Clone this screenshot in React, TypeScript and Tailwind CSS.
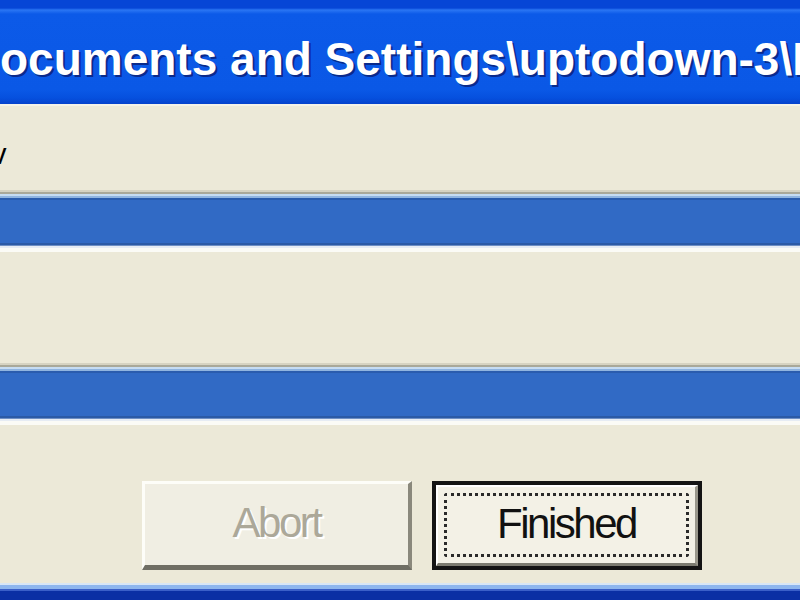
import React from "react";

function ProgressBar() {
  return (
    <div className="flex flex-col">
      <div className="h-[2px] bg-[#d6d3c2]" />
      <div className="h-[2px] bg-[#a9a899]" />
      <div className="h-[2px] bg-[#c6dcf2]" />
      <div className="h-[2px] bg-[#8fb4e0]" />
      <div className="h-[2px] bg-[#2a5cae]" />
      <div className="h-[43px] bg-[#316ac5]" />
      <div className="h-[2px] bg-[#2b5aa6]" />
      <div className="h-[1px] bg-[#6e8fc4]" />
      <div className="h-[2px] bg-[#e6ecf4]" />
      <div className="h-[4px] bg-[#fbfbf6]" />
    </div>
  );
}

export default function App() {
  return (
    <div
      className="w-[800px] h-[600px] overflow-hidden flex flex-col bg-[#ece9d8]"
      style={{ fontFamily: '"Liberation Sans", Arial, sans-serif' }}
    >
      {/* Title bar */}
      <div className="h-[104px] shrink-0 flex flex-col bg-[linear-gradient(to_bottom,#0646d6_0px,#0646d6_8px,#2a76f4_10px,#0c5ae8_14px,#0a58e6_90px,#0650de_98px,#0442cc_104px)]">
        <div className="pt-[36px] flex whitespace-nowrap text-white font-bold text-[46px] leading-none [text-shadow:2px_2px_0_#0a2a8c]">
          <span className="w-0 flex justify-end">C:\D</span>
          <span>ocuments and Settings\uptodown-3\Local Settings</span>
        </div>
      </div>
      <div className="h-[2px] shrink-0 bg-[#f4f2e8]" />

      {/* Row 1 */}
      <div className="h-[84px] shrink-0 overflow-hidden">
        <div className="pt-[34px] ml-[-8px] text-[29px] leading-none text-black whitespace-nowrap">
          v
        </div>
      </div>

      <ProgressBar />

      {/* Row 2 */}
      <div className="h-[111px] shrink-0" />

      <ProgressBar />

      {/* Buttons area */}
      <div className="h-[158px] shrink-0 flex justify-end items-start pt-[56px] pr-[98px] gap-[20px]">
        <div className="w-[270px] h-[89px] bg-[#f0eee3] border-t-[3px] border-l-[3px] border-t-[#fdfdf8] border-l-[#fdfdf8] border-b-[5px] border-r-[4px] border-b-[#6f6e64] border-r-[#8a887c] flex items-center justify-center pb-[3px]">
          <span className="text-[42px] leading-none tracking-[-2.5px] text-[#aca899] [text-shadow:2px_2px_0_#ffffff]">
            Abort
          </span>
        </div>
        <div className="w-[270px] h-[89px] border-[4px] border-[#141414] bg-[#f3f1e6] flex">
          <div className="flex-1 border-t-[2px] border-l-[2px] border-t-white border-l-white border-b-[3px] border-r-[3px] border-b-[#7c7b70] border-r-[#9a988c] flex p-[6px]">
            <div className="flex-1 border-[3px] border-dotted border-[#2a2a2a] rounded-[3px] flex items-center justify-center pb-[3px]">
              <span className="text-[42px] leading-none tracking-[-2.5px] text-[#111]">
                Finished
              </span>
            </div>
          </div>
        </div>
      </div>

      {/* Bottom window frame */}
      <div className="h-[2px] shrink-0 bg-[#d8e6f6]" />
      <div className="h-[4px] shrink-0 bg-[#8eb6ee]" />
      <div className="h-[2px] shrink-0 bg-[#3a5fc8]" />
      <div className="flex-1 bg-[#0a2fa4]" />
    </div>
  );
}
